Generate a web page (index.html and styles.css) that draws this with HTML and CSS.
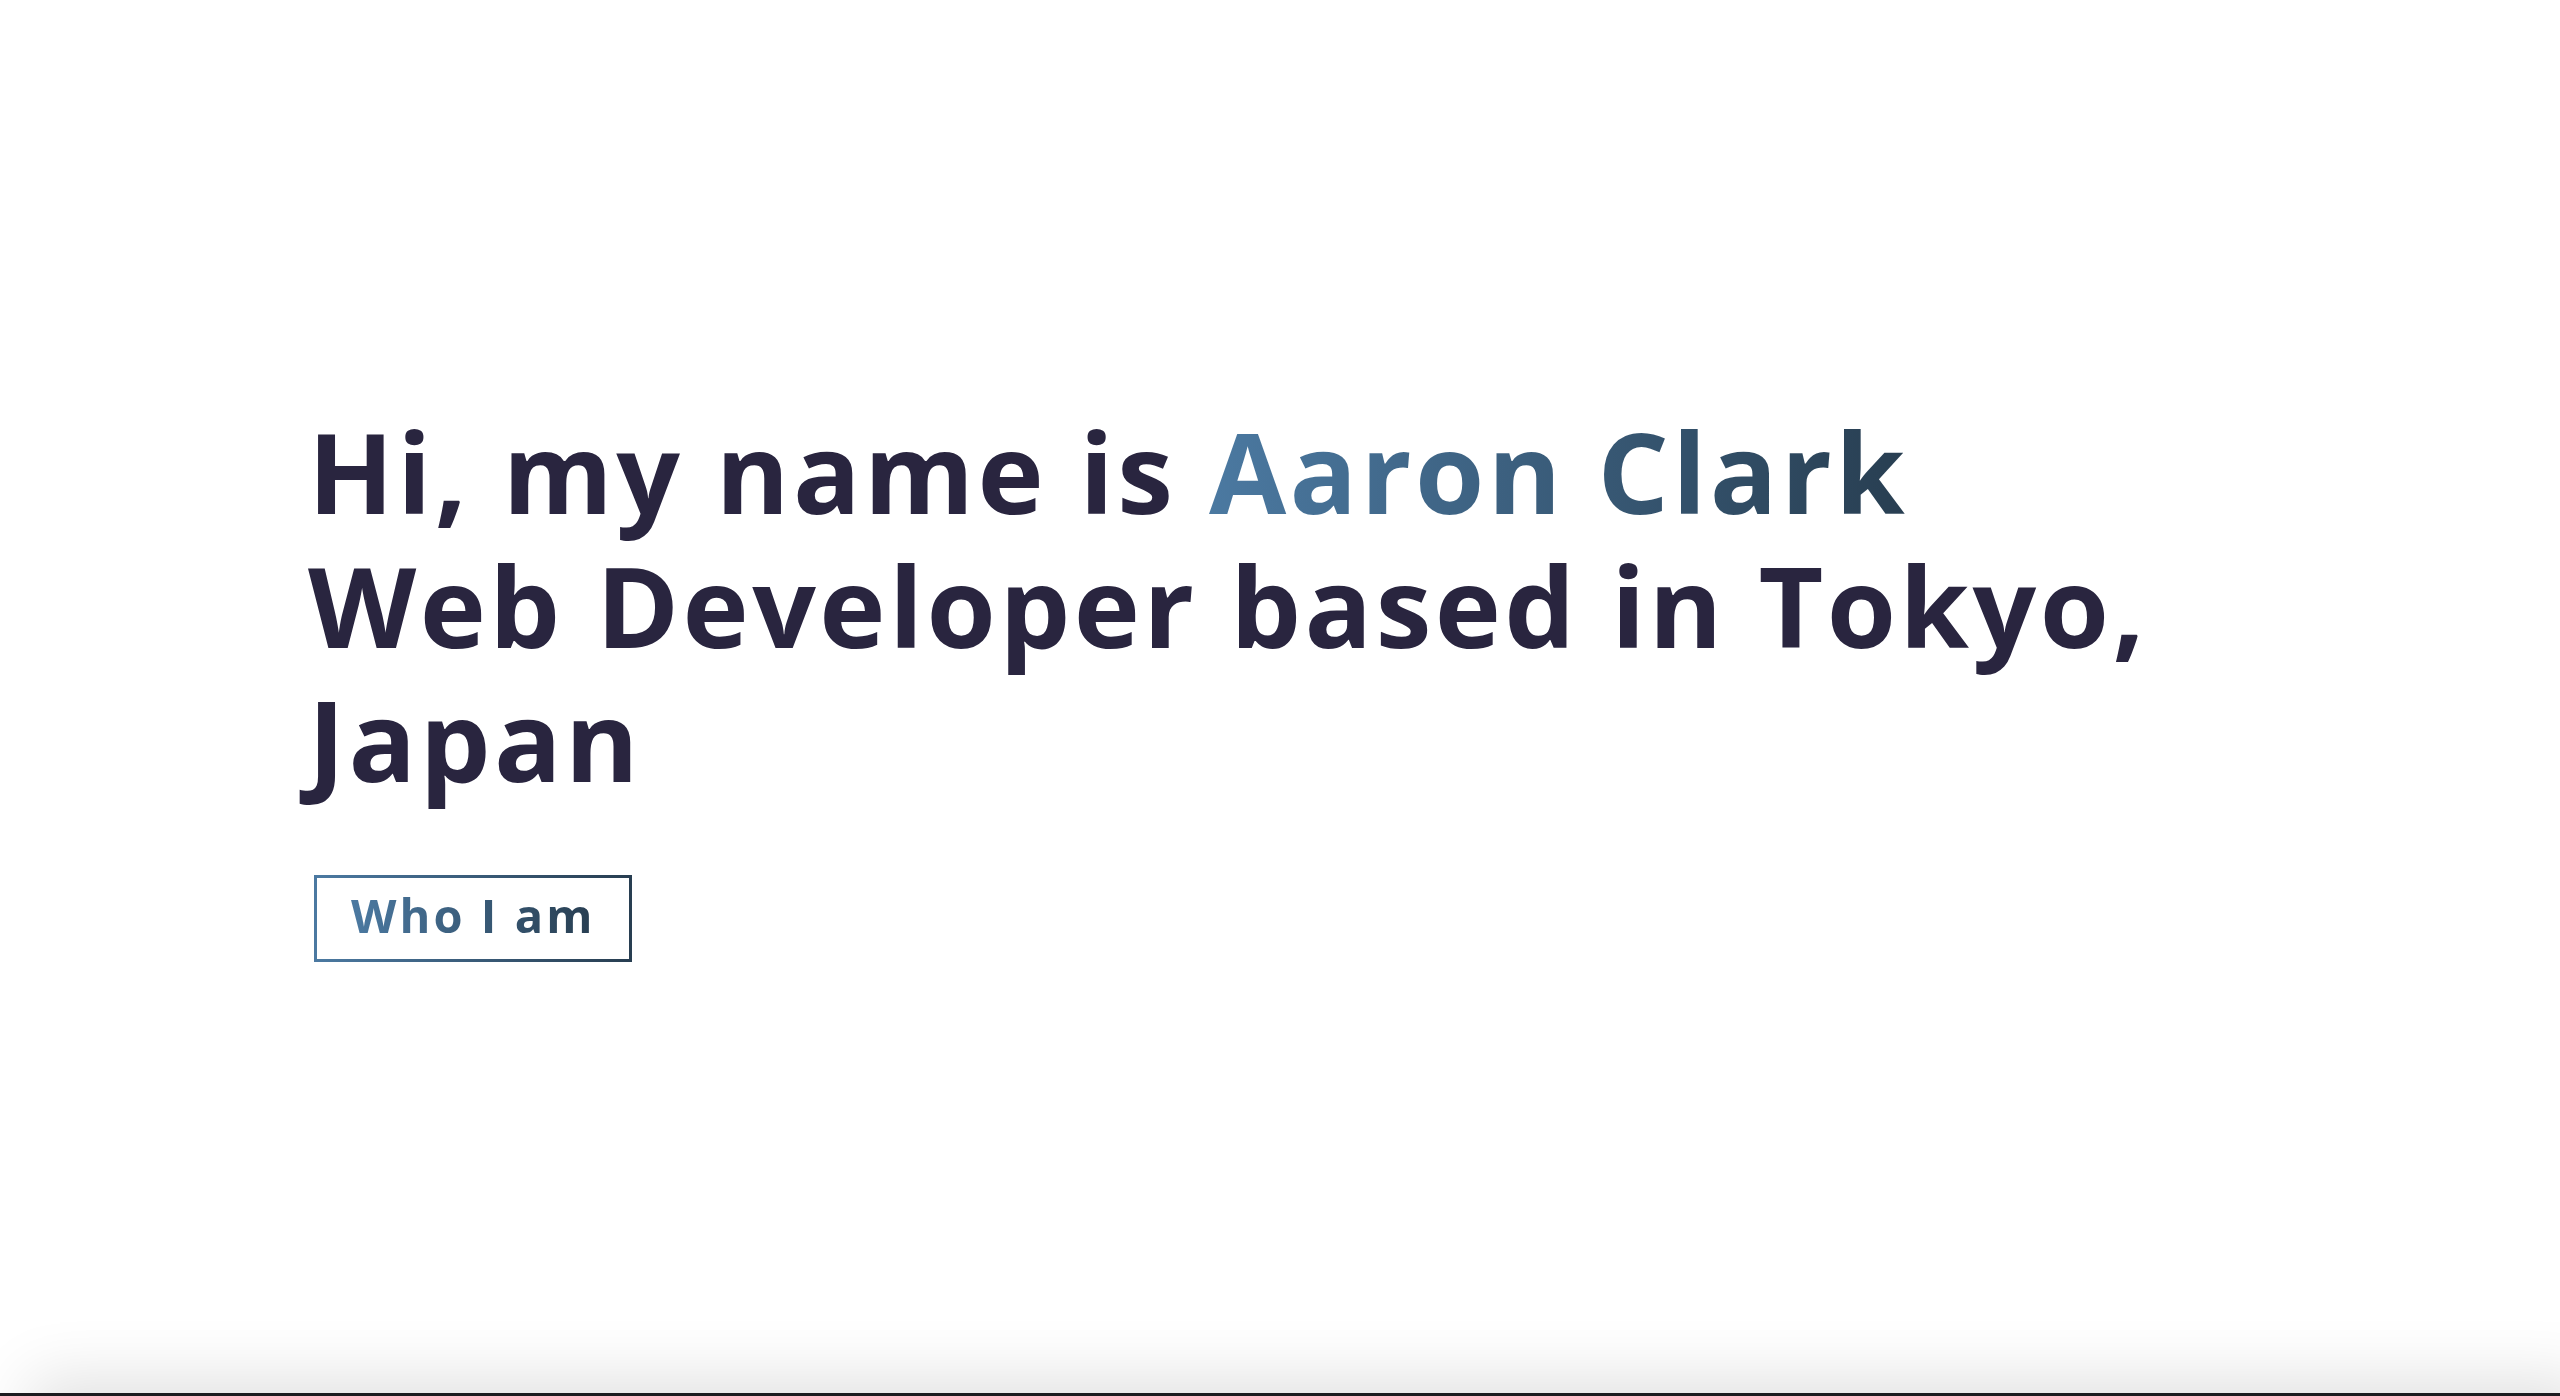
FILE: index.html
```html
<!DOCTYPE html>
<html lang="en">
<head>
<meta charset="utf-8">
<title>Aaron Clark</title>
<link rel="stylesheet" href="styles.css">
</head>
<body>
<section class="hero">
  <div class="hero-inner">
    <h1 class="hero-title">
      <span class="line">Hi, my name is <span class="accent">Aaron Clark</span></span>
      <span class="line">Web Developer based in Tokyo, Japan</span>
    </h1>
    <a class="btn" href="#about"><span class="btn-text">Who I am</span></a>
  </div>
</section>
<section class="next" id="about"></section>
</body>
</html>
```
FILE: styles.css
```css
html, body {
  margin: 0;
  padding: 0;
}
body {
  font-family: "Open Sans", "Noto Sans", sans-serif;
  background: #ffffff;
  color: #29253f;
  overflow: hidden;
}
.hero {
  height: 1393px;
  box-sizing: border-box;
  padding-top: 404px;
  background: #ffffff;
}
.hero-inner {
  max-width: 1956px;
  margin: 0 auto;
  padding: 0 296px 0 308px;
}
.hero-title {
  margin: 0;
  font-size: 112px;
  font-weight: 700;
  line-height: 134px;
  letter-spacing: 3.45px;
  color: #29253f;
}
.line {
  display: block;
}
.accent {
  background: linear-gradient(to right, #4b79a1, #283e51);
  -webkit-background-clip: text;
  background-clip: text;
  color: transparent;
}
.btn {
  display: inline-block;
  margin-top: 69px;
  margin-left: 6px;
  padding: 14px 34px 20px;
  border: 3px solid #4b79a1;
  border-image: linear-gradient(to right, #4b79a1, #283e51) 1;
  text-decoration: none;
  font-size: 47px;
  font-weight: 700;
  line-height: 47px;
  letter-spacing: 0.065em;
}
.btn-text {
  background: linear-gradient(to right, #4b79a1, #283e51);
  -webkit-background-clip: text;
  background-clip: text;
  color: transparent;
}
.next {
  position: relative;
  height: 400px;
  background: #1c1c20;
  box-shadow: 30px -15px 60px rgba(0, 0, 0, 0.12);
}
```
